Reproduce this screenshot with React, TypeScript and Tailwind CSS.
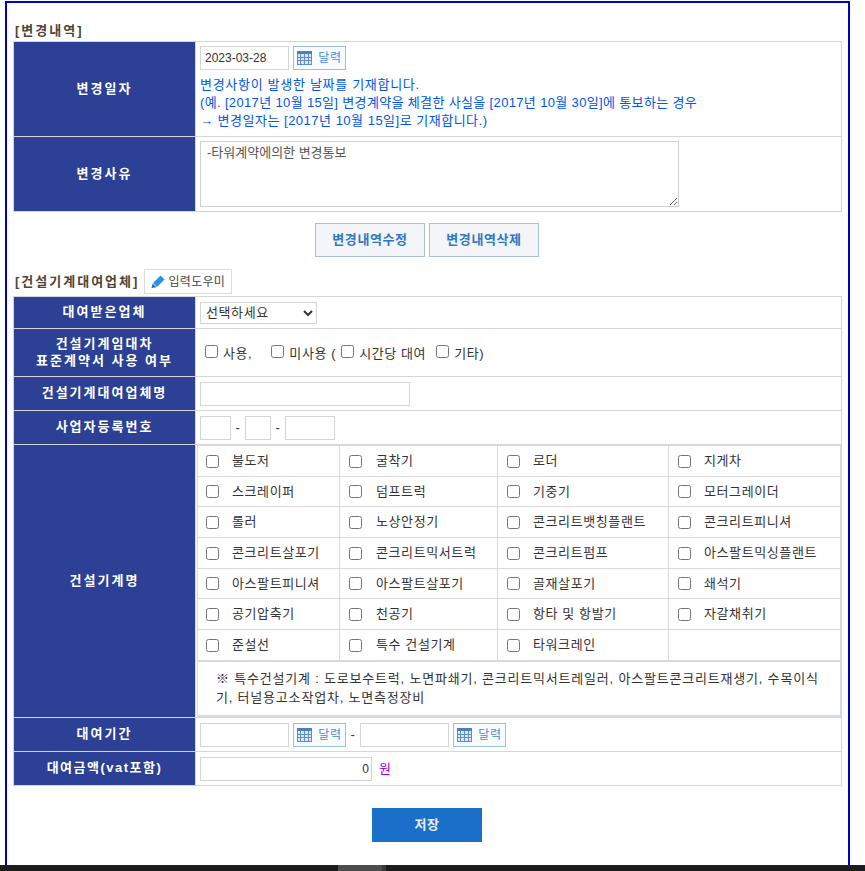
import type { ReactNode } from 'react'

const machines = [
  ['불도저', '굴착기', '로더', '지게차'],
  ['스크레이퍼', '덤프트럭', '기중기', '모터그레이더'],
  ['롤러', '노상안정기', '콘크리트뱃칭플랜트', '콘크리트피니셔'],
  ['콘크리트살포기', '콘크리트믹서트럭', '콘크리트펌프', '아스팔트믹싱플랜트'],
  ['아스팔트피니셔', '아스팔트살포기', '골재살포기', '쇄석기'],
  ['공기압축기', '천공기', '항타 및 항발기', '자갈채취기'],
  ['준설선', '특수 건설기계', '타워크레인', ''],
]

const rowHeights = ['h-[31px]', 'h-[30px]', 'h-[31px]', 'h-[31px]', 'h-[30px]', 'h-[31px]', 'h-[31px]']

function CalendarIcon() {
  return (
    <svg width="15" height="14" viewBox="0 0 15 14" className="shrink-0">
      <rect x="0.5" y="0.5" width="14" height="13" fill="#dbe7f5" stroke="#5f8fc4" />
      <rect x="0" y="0" width="15" height="3" fill="#4f7fb8" />
      <path d="M0 6.5h15M0 9.5h15M3.5 3v11M7.5 3v11M11.5 3v11" stroke="#5f8fc4" strokeWidth="1" />
    </svg>
  )
}

function CalendarButton() {
  return (
    <button className="flex h-[24px] w-[53px] items-center justify-center gap-[6px] border border-[#9dbde3] bg-[#f8fbfe] text-[12px] text-[#3f8fe0]">
      <CalendarIcon />
      <span>달력</span>
    </button>
  )
}

function PencilIcon() {
  return (
    <svg width="14" height="13" viewBox="0 0 14 13" className="shrink-0">
      <path d="M9.5 0.5l4 4-7.5 7.5-4-4z" fill="#2f8fe6" />
      <path d="M1.6 8.4l3.8 3.8-4.9 0.8z" fill="#1c6fc0" />
    </svg>
  )
}

function TextInput({ className = '', value }: { className?: string; value?: string }) {
  return (
    <input
      type="text"
      defaultValue={value}
      className={`h-[24px] border border-[#d5d5d5] bg-white py-0 pr-[2px] pl-[4px] text-[12px] tracking-normal text-[#333] outline-none ${className}`}
    />
  )
}

function Label({ children }: { children: ReactNode }) {
  return (
    <th className="border border-[#d5d5d5] bg-[#2c4095] p-0 pb-[2px] text-center align-middle text-[13px] leading-[17px] font-bold tracking-[2px] text-white">
      {children}
    </th>
  )
}

function Value({ children, className = '' }: { children?: ReactNode; className?: string }) {
  return (
    <td className={`border border-[#d5d5d5] bg-white px-[4px] py-0 align-middle ${className}`}>{children}</td>
  )
}

function SectionTitle({ children }: { children: ReactNode }) {
  return <span className="text-[13px] font-bold tracking-[2px] text-[#4d4436]">{children}</span>
}

function Check({ label }: { label: string }) {
  return (
    <label className="flex items-center gap-[5px]">
      <input type="checkbox" className="m-0 mb-[3px] h-[13px] w-[13px]" />
      <span className="mt-[2px]">{label}</span>
    </label>
  )
}

export default function App() {
  return (
    <div
      className="flex h-[871px] w-[865px] flex-col overflow-hidden bg-white text-[13px] tracking-[0.6px] text-[#333]"
      style={{ fontFamily: '"Liberation Sans", "Noto Sans CJK KR", sans-serif' }}
    >
      <div className="mt-px ml-[5px] h-[864px] w-[845px] shrink-0 border-[2px] border-b-0 border-[#0000cd] pt-[18px] pl-[6px]">
        <div className="mb-px flex h-[19px] items-center pl-[2px]">
          <SectionTitle>[변경내역]</SectionTitle>
        </div>

        <table className="w-[829px] table-fixed border-collapse">
          <colgroup>
            <col className="w-[182px]" />
            <col />
          </colgroup>
          <tbody>
            <tr className="h-[95px]">
              <Label>변경일자</Label>
              <Value className="!pt-[4px] !align-top">
                <div className="flex items-center gap-[4px]">
                  <TextInput className="w-[89px]" value="2023-03-28" />
                  <CalendarButton />
                </div>
                <div className="mt-[6px] leading-[18px] text-[#0055ee]">
                  <p className="tracking-[0.7px]">변경사항이 발생한 날짜를 기재합니다.</p>
                  <p className="tracking-[0.35px]">(예. [2017년 10월 15일] 변경계약을 체결한 사실을 [2017년 10월 30일]에 통보하는 경우</p>
                  <p className="tracking-[0.5px]">→ 변경일자는 [2017년 10월 15일]로 기재합니다.)</p>
                </div>
              </Value>
            </tr>
            <tr className="h-[75px]">
              <Label>변경사유</Label>
              <Value>
                <textarea
                  defaultValue="-타워계약에의한 변경통보"
                  className="block h-[66px] w-[479px] border border-[#cfcfcf] px-[6px] py-[3px] text-[13px] leading-[16px] tracking-normal text-[#555] outline-none"
                />
              </Value>
            </tr>
          </tbody>
        </table>

        <div className="mt-[11px] flex justify-center gap-[4px] pr-[7px]">
          <button className="h-[34px] w-[110px] border border-[#a8bfd9] bg-[#f3f5f8] text-[13px] font-bold text-[#2f78c4]">
            변경내역수정
          </button>
          <button className="h-[34px] w-[110px] border border-[#a8bfd9] bg-[#f3f5f8] text-[13px] font-bold text-[#2f78c4]">
            변경내역삭제
          </button>
        </div>

        <div className="mt-[12px] flex h-[25px] items-center gap-[5px] pl-[2px]">
          <SectionTitle>[건설기계대여업체]</SectionTitle>
          <button className="flex h-[25px] w-[88px] items-center justify-center gap-[3px] border border-[#dcdcdc] bg-white text-[12px] tracking-[0.3px] text-[#444]">
            <PencilIcon />
            입력도우미
          </button>
        </div>

        <table className="mt-[2px] w-[829px] table-fixed border-collapse">
          <colgroup>
            <col className="w-[182px]" />
            <col />
          </colgroup>
          <tbody>
            <tr className="h-[32px]">
              <Label>대여받은업체</Label>
              <Value>
                <select className="block h-[22px] w-[117px] border border-[#d5d5d5] bg-white pl-px text-[13px] text-[#333]">
                  <option>선택하세요</option>
                </select>
              </Value>
            </tr>
            <tr className="h-[48px]">
              <Label>
                건설기계임대차
                <br />
                표준계약서 사용 여부
              </Label>
              <Value>
                <div className="flex items-center pl-[5px]">
                  <Check label="사용," />
                  <span className="w-[19px]" />
                  <Check label="미사용 (" />
                  <span className="w-[5px]" />
                  <Check label="시간당 대여" />
                  <span className="w-[10px]" />
                  <Check label="기타)" />
                </div>
              </Value>
            </tr>
            <tr className="h-[34px]">
              <Label>건설기계대여업체명</Label>
              <Value>
                <TextInput className="block w-[210px]" />
              </Value>
            </tr>
            <tr className="h-[34px]">
              <Label>사업자등록번호</Label>
              <Value>
                <div className="flex items-center">
                  <TextInput className="w-[31px]" />
                  <span className="w-[14px] text-center">-</span>
                  <TextInput className="w-[26px]" />
                  <span className="w-[14px] text-center">-</span>
                  <TextInput className="w-[50px]" />
                </div>
              </Value>
            </tr>
            <tr className="h-[273px]">
              <Label>건설기계명</Label>
              <td className="border border-[#d5d5d5] bg-white p-0 pl-px align-top">
                <table className="w-[644px] table-fixed border-collapse">
                  <colgroup>
                    <col className="w-[142px]" />
                    <col className="w-[158px]" />
                    <col className="w-[171px]" />
                    <col />
                  </colgroup>
                  <tbody>
                    {machines.map((row, i) => (
                      <tr key={i} className={rowHeights[i]}>
                        {row.map((name, j) => (
                          <td key={j} className="border border-[#d9d9d9] p-0 align-middle">
                            {name && (
                              <label className={`flex items-center ${j === 0 ? 'pl-[8px]' : 'pl-[9px]'} ${j === 1 ? 'gap-[14px]' : 'gap-[13px]'}`}>
                                <input type="checkbox" className="m-0 h-[13px] w-[13px] shrink-0" />
                                <span className="leading-[16px] whitespace-nowrap">{name}</span>
                              </label>
                            )}
                          </td>
                        ))}
                      </tr>
                    ))}
                  </tbody>
                </table>
                <div className="h-[56px] w-[644px] border border-b-[2px] border-[#d5dbe3] px-[18px] pt-[7px] leading-[19px] tracking-[0.8px]">
                  <p className="whitespace-nowrap">※ 특수건설기계 : 도로보수트럭, 노면파쇄기, 콘크리트믹서트레일러, 아스팔트콘크리트재생기, 수목이식</p>
                  <p className="whitespace-nowrap">기, 터널용고소작업차, 노면측정장비</p>
                </div>
              </td>
            </tr>
            <tr className="h-[34px]">
              <Label>대여기간</Label>
              <Value>
                <div className="flex items-center gap-[4px]">
                  <TextInput className="w-[89px]" />
                  <CalendarButton />
                  <span className="w-[6px] text-center">-</span>
                  <TextInput className="w-[89px]" />
                  <CalendarButton />
                </div>
              </Value>
            </tr>
            <tr className="h-[34px]">
              <Label>
                <span className="tracking-[1.5px]">대여금액(vat포함)</span>
              </Label>
              <Value>
                <div className="flex items-center gap-[7px]">
                  <TextInput className="w-[172px] text-right" value="0" />
                  <span className="text-[#a000e0]">원</span>
                </div>
              </Value>
            </tr>
          </tbody>
        </table>

        <div className="mt-[22px] flex justify-center pr-[7px]">
          <button className="h-[34px] w-[110px] bg-[#1a6fc9] text-[13px] font-bold text-[#e8f0f8]">저장</button>
        </div>
      </div>

      <div className="flex h-[6px] shrink-0 bg-[#1c1c1c] pl-[338px]">
        <div className="h-full w-[44px] bg-[#4d4d4d]" />
        <div className="h-full w-[4px] bg-[#3a3a3a]" />
      </div>
    </div>
  )
}
